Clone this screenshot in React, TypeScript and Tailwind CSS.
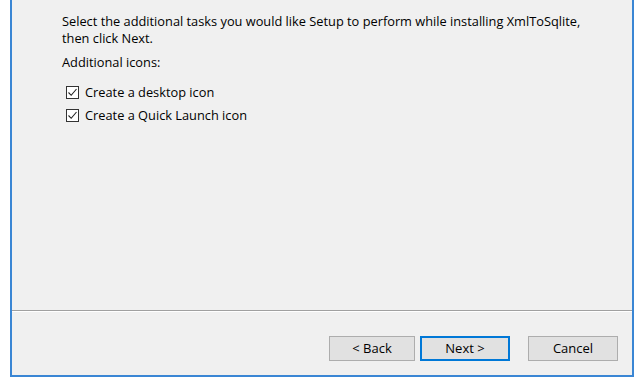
import React from "react";

function Check() {
  return (
    <span className="flex h-[13px] w-[13px] items-center justify-center border border-[#333] bg-white">
      <svg width="11" height="11" viewBox="0 0 11 11" fill="none">
        <path d="M1.5 5.5 L4.2 8.3 L9.5 2" stroke="#222" strokeWidth="1.1" />
      </svg>
    </span>
  );
}

function Btn({ label, primary, w }: { label: string; primary?: boolean; w: string }) {
  return (
    <div
      className={
        "flex h-[25px] items-center justify-center bg-[#e1e1e1] text-[13px] text-black " +
        w +
        (primary ? " border-2 border-[#0078d7]" : " border border-[#adadad]")
      }
    >
      {label}
    </div>
  );
}

export default function App() {
  return (
    <div
      className="h-[383px] w-[644px] overflow-hidden bg-white"
      style={{ fontFamily: '"Open Sans", "Noto Sans", sans-serif' }}
    >
      <div className="ml-[10px] flex h-[377px] w-[624px] flex-col border-x-2 border-b-2 border-[#3a86d4] bg-[#f0f0f0]">
        <div className="flex h-[310px] flex-col pl-[50px] pt-[13px] text-[12.8px] leading-[17px] text-black">
          <p>Select the additional tasks you would like Setup to perform while installing XmlToSqlite,</p>
          <p>then click Next.</p>
          <p className="mt-[7px]">Additional icons:</p>
          <div className="mt-[13px] flex flex-col gap-[6px] pl-[4px]">
            <label className="flex items-center gap-[6px]">
              <Check />
              <span>Create a desktop icon</span>
            </label>
            <label className="flex items-center gap-[6px]">
              <Check />
              <span>Create a Quick Launch icon</span>
            </label>
          </div>
        </div>
        <div className="h-px bg-[#a0a0a0]" />
        <div className="h-px bg-white" />
        <div className="flex flex-1 items-start pr-[14px] pt-[24px]">
          <div className="ml-auto flex items-center">
            <Btn label="< Back" w="w-[86px]" />
            <div className="w-[5px]" />
            <Btn label="Next >" primary w="w-[90px]" />
            <div className="w-[18px]" />
            <Btn label="Cancel" w="w-[90px]" />
          </div>
        </div>
      </div>
    </div>
  );
}
